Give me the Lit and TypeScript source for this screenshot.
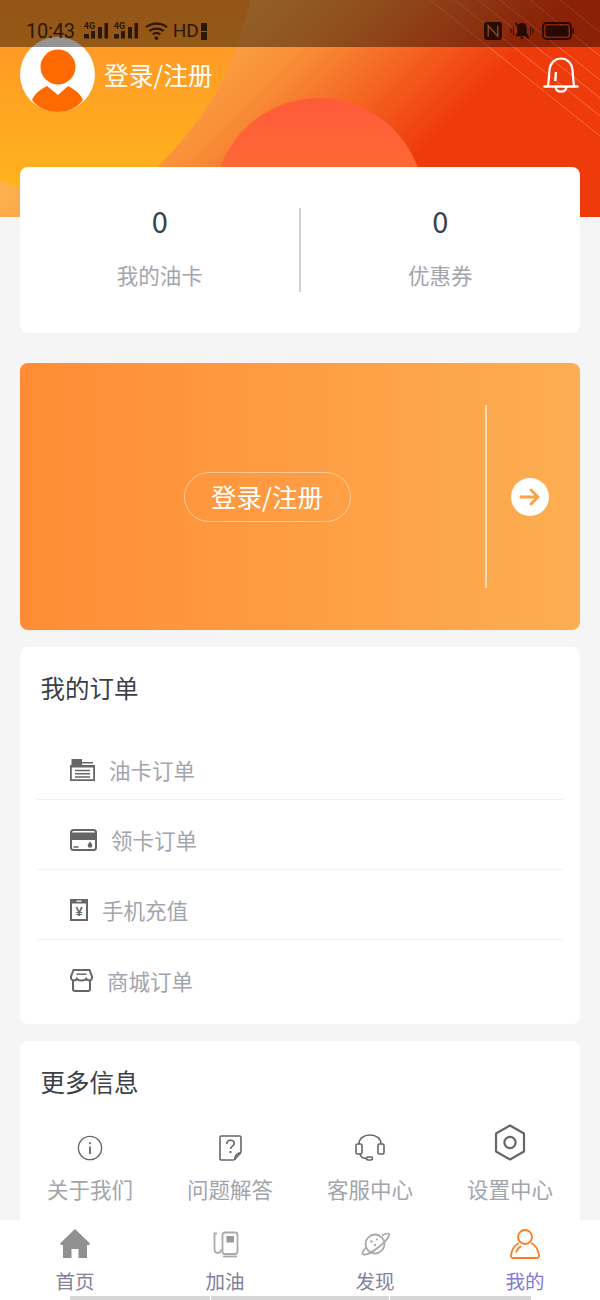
import { css, html, LitElement, svg } from "lit";
import { customElement } from "lit/decorators.js";

const orderIcons = {
    oilCard: html`<svg width="25" height="22" viewBox="0 0 25 22" fill="#666">
        <path d="M1.500 0H12v6H1.500zM12 3h11v1.500H12z"/>
        <path d="M0 6h25v16H0zM1.800 8.500v11.800h21.400V8.500z" fill-rule="evenodd"/>
        <path d="M5 10.800h15v1.500H5zM5 14h15v1.500H5zM5 17.200h15v1.500H5z"/>
    </svg>`,
    takeCard: html`<svg width="27" height="22" viewBox="0 0 27 22">
        <rect x="1" y="1" width="25" height="20" rx="2.500" fill="none" stroke="#666" stroke-width="2"/>
        <path fill="#666" d="M1 3.500h25V11H1zM3.500 17.200h5v1.500h-5z"/>
        <path fill="#666" d="M20 12.500c1.400 1.700 2.300 2.800 2.300 3.900a2.300 2.300 0 0 1-4.600 0c0-1.100.9-2.200 2.300-3.900z"/>
    </svg>`,
    recharge: html`<svg width="18" height="22" viewBox="0 0 18 22">
        <path fill="#666" d="M0 0h18v22H0zM2 4.500V20h14V4.500zM6.500 1.600v1.200h5V1.600z" fill-rule="evenodd"/>
        <text x="9" y="17" text-anchor="middle" font-size="13" font-weight="700" font-family="Liberation Sans" fill="#666">¥</text>
    </svg>`,
    store: html`<svg width="23" height="23" viewBox="0 0 23 23" fill="none" stroke="#666" stroke-width="2">
        <path d="M3.500 1h16l2.500 6.500c.3 2.400-1 4-2.800 4-1.500 0-2.600-.7-3.100-1.700-.6 1-1.900 1.700-4.600 1.700s-4-.7-4.600-1.700c-.5 1-1.600 1.700-3.100 1.700C2 11.500.7 9.900 1 7.500z"/>
        <path d="M3 11.500V20a2 2 0 0 0 2 2h13a2 2 0 0 0 2-2v-8.500"/>
        <path stroke-width="1.500" d="M6.500 5.200h10"/>
    </svg>`,
};

const moreIcons = {
    info: html`<svg width="26" height="26" viewBox="0 0 26 26" fill="none" stroke="#666" stroke-width="1.400">
        <circle cx="13" cy="13" r="11.600"/>
        <path stroke-width="1.800" d="M13 11.500v7.500M13 7.200v2"/>
    </svg>`,
    question: html`<svg width="23" height="26" viewBox="0 0 23 26" fill="none" stroke="#666" stroke-width="1.600">
        <path d="M2.500 1h18a1.500 1.500 0 0 1 1.500 1.500v14c0 1-.6 1.200-1 2l-5.500 6c-.4.400-.8.500-1.500.500H2.500A1.500 1.500 0 0 1 1 23.500v-21A1.500 1.500 0 0 1 2.500 1z"/>
        <path d="M16 25c-.6-4 1.500-7 6-7.500"/>
        <path d="M7.800 9c0-2.400 1.600-3.800 3.700-3.800s3.700 1.300 3.700 3.300c0 2.600-3.700 2.800-3.700 5.500"/>
        <path stroke-width="2" d="M11.500 16v2"/>
    </svg>`,
    headset: html`<svg width="30" height="27" viewBox="0 0 30 27" fill="none" stroke="#666" stroke-width="1.600">
        <path d="M4 10C4 4.500 8.800 1 15 1s11 3.500 11 9"/>
        <rect x="1" y="10" width="6" height="10" rx="1.500"/>
        <rect x="23" y="10" width="6" height="10" rx="1.500"/>
        <path d="M5 20c.6 2.500 3 4.500 6.500 4.500"/>
        <rect x="11.500" y="23" width="6" height="3" rx="1.500"/>
    </svg>`,
    settings: html`<svg width="32" height="37" viewBox="0 0 32 37" fill="none" stroke="#666" stroke-width="2.200">
        <path d="M16 1.500l14 8v18l-14 8-14-8v-18z" stroke-linejoin="round"/>
        <circle cx="16" cy="18.500" r="5.600"/>
    </svg>`,
};

const tabIcons = {
    home: html`<svg width="30" height="30" viewBox="0 0 30 30">
        <path fill="#909090" d="M15 0l15 14.500-1 1.500h-2v13H18.500v-9h-7v9H3V16H1l-1-1.500z"/>
    </svg>`,
    fuel: html`<svg width="27" height="27" viewBox="0 0 27 27" fill="none" stroke="#aaa" stroke-width="1.800">
        <path d="M5 2.500H2.500v15c0 3 1.500 4.500 3.300 4.500S9 20.500 9 18.500"/>
        <rect x="10.500" y="1.500" width="15" height="21.500" rx="2.500"/>
        <path fill="#999" stroke="none" d="M14.500 5H22v6.500h-7.500z"/>
        <path d="M11 25.500h14"/>
    </svg>`,
    planet: html`<svg width="30" height="26" viewBox="0 0 30 26" fill="none" stroke="#aaa" stroke-width="1.800">
        <circle cx="15" cy="13" r="9.500"/>
        <path d="M22 4.500c3-1.600 6-2.500 7-1.500 1.400 1.600-3 7.300-9.500 12.500S5.500 24.800 3 23.300c-1.500-1 .2-3.800 3.500-7.300"/>
        <circle cx="11.500" cy="10.500" r="1.300" fill="#aaa" stroke="none"/>
        <circle cx="17" cy="8.500" r="1" fill="#aaa" stroke="none"/>
        <circle cx="15" cy="14" r="1.200" fill="#aaa" stroke="none"/>
    </svg>`,
    mine: html`<svg width="30" height="30" viewBox="0 0 30 30" fill="none" stroke="#ff7a1e" stroke-width="1.800">
        <circle cx="15" cy="8" r="7"/>
        <path d="M9 14C4.500 16 1.800 20 1 26.500c-.2 1.500.6 2.500 2 2.500h24c1.400 0 2.200-1 2-2.500C28.200 20 25.500 16 21 14"/>
        <path d="M6 23.500c1-3 2.500-5 5-6.500"/>
    </svg>`,
};

const bell = html`<svg width="36" height="36" viewBox="0 0 36 36" fill="none" stroke="#fff" stroke-width="2.200">
    <path d="M5 29C6 22 6 18 6.500 13 7 6 12 1.500 18 1.500S29 6 29.500 13C30 18 30 22 31 29"/>
    <path stroke-width="2.600" stroke-linecap="round" d="M1.500 29.500h33"/>
    <path d="M12.500 30c.5 3 3 4.700 5.500 4.700s5-1.700 5.500-4.700"/>
    <path d="M13 15l-.8 9" stroke-width="2.400"/>
</svg>`;

const signalBars = svg`
    <rect x="0" y="11" width="5" height="4.500"/>
    <rect x="7" y="8" width="4" height="7.500"/>
    <rect x="14" y="4" width="4" height="11.500"/>
    <rect x="20.500" y="0" width="3.500" height="15.500"/>`;

const orders = [
    { icon: orderIcons.oilCard, label: "油卡订单" },
    { icon: orderIcons.takeCard, label: "领卡订单" },
    { icon: orderIcons.recharge, label: "手机充值" },
    { icon: orderIcons.store, label: "商城订单" },
];

const more = [
    { icon: moreIcons.info, label: "关于我们" },
    { icon: moreIcons.question, label: "问题解答" },
    { icon: moreIcons.headset, label: "客服中心" },
    { icon: moreIcons.settings, label: "设置中心" },
];

const tabs = [
    { icon: tabIcons.home, label: "首页", active: false },
    { icon: tabIcons.fuel, label: "加油", active: false },
    { icon: tabIcons.planet, label: "发现", active: false },
    { icon: tabIcons.mine, label: "我的", active: true },
];

@customElement("status-bar")
export class StatusBar extends LitElement {
    static styles = css`
        :host {
            position: absolute;
            left: 0;
            top: 0;
            right: 0;
            height: 47px;
            background: rgba(0, 0, 0, 0.42);
            display: flex;
            align-items: center;
            padding: 15px 26px 0 26px;
            box-sizing: border-box;
            color: #000;
            font-family: Roboto, sans-serif;
        }
        .ink {
            display: flex;
            align-items: center;
            opacity: 0.72;
        }
        .time {
            font-size: 20px;
            line-height: 24px;
            letter-spacing: -0.2px;
            margin-right: 9px;
        }
        .sig {
            position: relative;
            width: 24px;
            height: 16px;
            margin-right: 6px;
        }
        .sig b {
            position: absolute;
            left: 0;
            top: -1px;
            font-size: 9px;
            line-height: 9px;
            font-weight: 700;
        }
        .sig svg {
            display: block;
        }
        .wifi {
            margin-left: 1px;
        }
        .hd {
            font-size: 19px;
            line-height: 24px;
            margin: 0 2px 0 5px;
        }
        .right {
            margin-left: auto;
            gap: 7px;
        }
    `;

    render() {
        const sig = html`<div class="sig"><b>4G</b><svg width="24" height="16" viewBox="0 0 24 16">${signalBars}</svg></div>`;
        return html`
            <div class="ink">
                <span class="time">10:43</span>
                ${sig}${sig}
                <svg class="wifi" width="23" height="18" viewBox="0 0 24 19" fill="none" stroke="#000" stroke-width="2.400">
                    <path d="M1 5.500c6-5 16-5 22 0M4.500 9.500c4-3.400 11-3.400 15 0M8 13c2.400-1.800 5.600-1.800 8 0"/>
                    <circle cx="12" cy="17" r="2" fill="#000" stroke="none"/>
                </svg>
                <span class="hd">HD</span>
                <svg width="6" height="17" viewBox="0 0 6 17"><path d="M0 0h6v8H0zM0 9h6v8H0z"/></svg>
            </div>
            <div class="ink right">
                <svg width="18" height="18" viewBox="0 0 19 19">
                    <rect width="19" height="19" rx="3.500"/>
                    <path d="M4.500 15V4l10 11V4" fill="none" stroke="#8a4a20" stroke-width="1.600"/>
                </svg>
                <svg width="26" height="18" viewBox="0 0 26 19">
                    <path d="M13 1c3 0 5 2 5 5v6l2 3H6l2-3V6c0-3 2-5 5-5zM11 16h4l-2 2.500zM1 7v5h1V7zM3.500 5v9h1V5zM24 7v5h1V7zM21.500 5v9h1V5z"/>
                    <path d="M6 1l14 16" stroke="#000" stroke-width="2"/>
                </svg>
                <svg width="32" height="18" viewBox="0 0 32 18">
                    <rect x="1" y="1" width="28" height="16" rx="3.500" fill="none" stroke="#000" stroke-width="1.800"/>
                    <rect x="3.500" y="3.500" width="23" height="11" rx="1.500"/>
                    <rect x="30.500" y="6" width="1.500" height="6" rx="0.700"/>
                </svg>
            </div>
        `;
    }
}

@customElement("app-root")
export class AppRoot extends LitElement {
    static styles = css`
        :host {
            display: block;
            position: relative;
            width: 600px;
            height: 1300px;
            overflow: hidden;
            background: #f5f5f5;
            font-family: "Noto Sans CJK SC", sans-serif;
        }
        .hero {
            position: relative;
            height: 217px;
            margin-bottom: -50px;
            box-sizing: border-box;
            padding: 37px 20px 0 20px;
            display: flex;
            align-items: flex-start;
            overflow: hidden;
        }
        .hero-bg {
            position: absolute;
            left: 0;
            top: 0;
        }
        .avatar {
            position: relative;
            flex: none;
        }
        .login-name {
            position: relative;
            margin: 19px 0 0 9px;
            font-size: 24.800px;
            line-height: 36px;
            color: #fff;
        }
        .bell {
            position: relative;
            margin: 20px 1px 0 auto;
            height: 36px;
        }
        .card {
            position: relative;
            margin: 0 20px;
            background: #fff;
            border-radius: 8px;
        }
        .stats {
            height: 166px;
            display: flex;
            align-items: center;
        }
        .stat {
            flex: 1;
            height: 84px;
            display: flex;
            flex-direction: column;
            align-items: center;
            justify-content: space-between;
        }
        .stat + .stat {
            border-left: 2px solid #d2d2d2;
            margin-left: -1px;
        }
        .stat-num {
            margin-top: -9px;
            font-size: 29px;
            line-height: 42px;
            color: #3b3f49;
        }
        .stat-label {
            margin-bottom: 1px;
            font-size: 21.500px;
            line-height: 32px;
            color: #a3a5ad;
        }
        .banner {
            margin: 30px 20px 17px 20px;
            height: 267px;
            border-radius: 8px;
            background: linear-gradient(90deg, #ff8c35 0%, #fdae52 100%);
            display: flex;
            align-items: center;
        }
        .banner-main {
            flex: 1;
            display: flex;
            justify-content: center;
            padding-left: 29px;
        }
        .pill {
            width: 167px;
            height: 50px;
            box-sizing: border-box;
            border: 1px solid rgba(255, 255, 255, 0.45);
            border-radius: 25px;
            padding-bottom: 3px;
            display: flex;
            align-items: center;
            justify-content: center;
            font-size: 25.500px;
            color: #fff;
        }
        .banner-side {
            width: 95px;
            height: 183px;
            box-sizing: border-box;
            border-left: 2px solid rgba(255, 255, 255, 0.6);
            display: flex;
            align-items: center;
            padding-left: 24px;
        }
        .arrow {
            width: 38px;
            height: 38px;
            border-radius: 50%;
            background: #fff;
            display: flex;
            align-items: center;
            justify-content: center;
        }
        .title {
            font-size: 24.500px;
            line-height: 36px;
            color: #3b3f49;
            padding: 23px 0 0 20.500px;
        }
        .orders {
            height: 377px;
            margin-bottom: 17px;
            box-sizing: border-box;
        }
        .order-list {
            margin: 24px 17px 0 17px;
        }
        .order {
            height: 70px;
            box-sizing: border-box;
            padding: 10px 0 0 33px;
            display: flex;
            align-items: center;
            gap: 14px;
            border-bottom: 1px solid #f1f1f1;
            font-size: 21.500px;
            color: #a3a5ad;
        }
        .order:last-child {
            border-bottom: 0;
        }
        .more {
            height: 240px;
            box-sizing: border-box;
        }
        .more-grid {
            display: grid;
            grid-template-columns: repeat(4, 1fr);
            margin-top: 21px;
        }
        .more-item {
            display: flex;
            flex-direction: column;
            align-items: center;
            font-size: 21.500px;
            color: #a3a5ad;
        }
        .more-icon {
            height: 40px;
            display: flex;
            align-items: flex-end;
            margin-bottom: 12px;
        }
        .tabbar {
            position: absolute;
            left: 0;
            right: 0;
            top: 1220px;
            height: 80px;
            background: #fff;
            display: grid;
            grid-template-columns: repeat(4, 150px);
        }
        .tab {
            display: flex;
            flex-direction: column;
            align-items: center;
            font-size: 19.500px;
            line-height: 28px;
            color: #82829a;
        }
        .tab.active {
            color: #8577d6;
        }
        .tab-icon {
            height: 30px;
            margin-top: 9px;
            margin-bottom: 8px;
            display: flex;
            align-items: center;
        }
        .home-bar {
            position: absolute;
            left: 70px;
            top: 76px;
            display: flex;
            gap: 1px;
            height: 4px;
        }
        .home-bar i {
            display: block;
            background: #d6d6d6;
            height: 4px;
        }
    `;

    render() {
        return html`
            <div class="hero">
                <svg class="hero-bg" width="600" height="217" viewBox="0 0 600 217">
                    <defs>
                        <linearGradient id="base" gradientUnits="userSpaceOnUse" x1="0" y1="0" x2="300" y2="300">
                            <stop offset="0.33" stop-color="#fdb04f"/>
                            <stop offset="0.58" stop-color="#f98f38"/>
                            <stop offset="0.95" stop-color="#ef3b0c"/>
                        </linearGradient>
                        <linearGradient id="sun" gradientUnits="userSpaceOnUse" x1="0" y1="0" x2="0" y2="190">
                            <stop offset="0" stop-color="#ff922a"/>
                            <stop offset="1" stop-color="#ffb41c"/>
                        </linearGradient>
                        <linearGradient id="coral" gradientUnits="userSpaceOnUse" x1="0" y1="98" x2="0" y2="170">
                            <stop offset="0" stop-color="#ff5a3a"/>
                            <stop offset="1" stop-color="#ff6a35"/>
                        </linearGradient>
                    </defs>
                    <rect width="600" height="217" fill="url(#base)"/>
                    <path fill="url(#sun)" d="M250 0C245 30 225 85 200 117 185 138 170 155 157 167 120 185 60 195 20 187 10 185 5 183 0 180V0z"/>
                    <circle cx="319" cy="203" r="105" fill="url(#coral)"/>
                    <g stroke="#fff" stroke-opacity="0.25" stroke-width="1">
                        <path d="M430 0L600 136M455 0L600 116M478 0L600 98M500 0L600 80M530 0L600 56M560 0L600 32"/>
                    </g>
                </svg>
                <svg class="avatar" width="75" height="75" viewBox="0 0 75 75">
                    <circle cx="37.500" cy="37.500" r="37.500" fill="#fff"/>
                    <circle cx="38" cy="30" r="17.500" fill="#ff6a00"/>
                    <path fill="#ff6a00" d="M12 63c3-7 9-11 15-14l11 9 10-9c6 3 12 7 15 14-6 8-15 12-25.500 12S18 71 12 63z"/>
                </svg>
                <div class="login-name">登录/注册</div>
                <div class="bell">${bell}</div>
            </div>

            <div class="card stats">
                <div class="stat"><div class="stat-num">0</div><div class="stat-label">我的油卡</div></div>
                <div class="stat"><div class="stat-num">0</div><div class="stat-label">优惠券</div></div>
            </div>

            <div class="card banner">
                <div class="banner-main"><div class="pill">登录/注册</div></div>
                <div class="banner-side">
                    <div class="arrow">
                        <svg width="22" height="20" viewBox="0 0 22 20" fill="none" stroke="#fca24a" stroke-width="3" stroke-linecap="round" stroke-linejoin="round">
                            <path d="M2 10h17M12 3l7 7-7 7"/>
                        </svg>
                    </div>
                </div>
            </div>

            <div class="card orders">
                <div class="title">我的订单</div>
                <div class="order-list">
                    ${orders.map(o => html`<div class="order">${o.icon}<span>${o.label}</span></div>`)}
                </div>
            </div>

            <div class="card more">
                <div class="title">更多信息</div>
                <div class="more-grid">
                    ${more.map(m => html`<div class="more-item"><div class="more-icon">${m.icon}</div><span>${m.label}</span></div>`)}
                </div>
            </div>

            <div class="tabbar">
                ${tabs.map(t => html`
                    <div class="tab ${t.active ? "active" : ""}">
                        <div class="tab-icon">${t.icon}</div>
                        <span>${t.label}</span>
                    </div>
                `)}
                <div class="home-bar">
                    <i style="width: 140px"></i><i style="width: 178px"></i><i style="width: 141px"></i>
                </div>
            </div>

            <status-bar></status-bar>
        `;
    }
}
